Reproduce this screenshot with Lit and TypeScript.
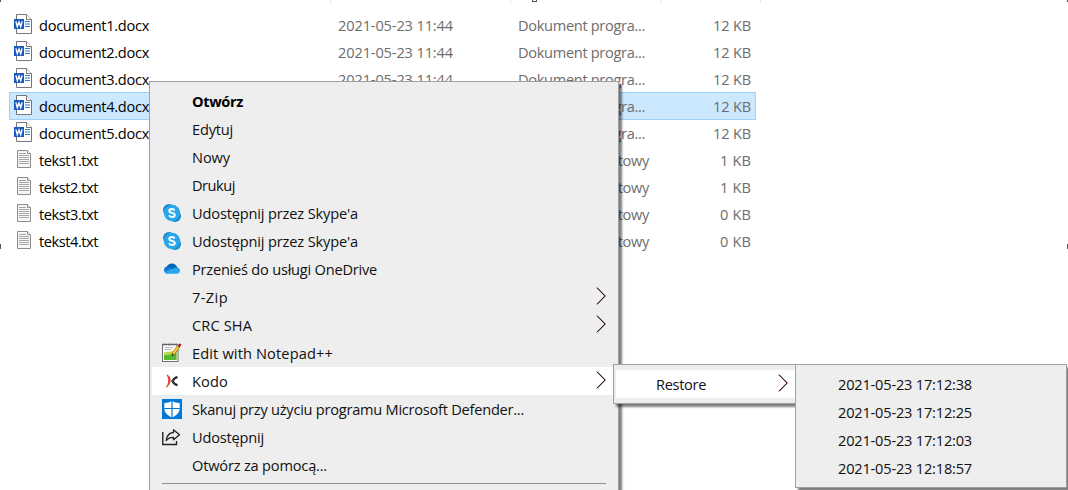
import { LitElement, html, css, svg, nothing } from "lit";
import { customElement, property } from "lit/decorators.js";
import { classMap } from "lit/directives/class-map.js";

/* Label whose letter spacing is adjusted so that it takes a given width. */
@customElement("fit-label")
class FitLabel extends LitElement {
  @property() text = "";
  @property({ type: Number }) width = 0;
  static styles = css`
    :host { display: block; white-space: pre; flex: none; }
    .t { display: inline-block; }
  `;
  render() {
    return html`<span class="t">${this.text}</span>`;
  }
  updated() {
    const el = this.renderRoot.querySelector(".t") as HTMLElement;
    el.style.letterSpacing = "0px";
    const natural = el.getBoundingClientRect().width;
    el.style.letterSpacing = (this.width - natural) / this.text.length + "px";
  }
}

const chevron = html`<svg class="chev" width="12" height="18" viewBox="0 0 12 18" fill="none">
  <path d="M.4 .7 8.600 9 .4 17.300" stroke="#f0a030" stroke-width=".8" />
  <path d="M1.400 .7 9.600 9 1.400 17.300" stroke="#3f7fd0" stroke-width=".8" />
  <path d="M.9 .7 9.100 9 .9 17.300" stroke="#3a0508" stroke-width="1" />
</svg>`;

const wordIcon = html`<svg width="18" height="20" viewBox="0 0 18 20">
  <path d="M2.5.5h10l5 5v14h-15z" fill="#fff" stroke="#767676" />
  <path d="M12.5.5v5h5" fill="#fff" stroke="#767676" />
  <path d="M11 7.5h5M11 10h5M11 12.5h5" stroke="#2b7cd3" />
  <rect y="5" width="10" height="10" fill="#185abd" />
  <path d="M1.9 7.4 3.3 12.6 5 8 6.7 12.6 8.1 7.4" fill="none" stroke="#fff" stroke-width="1.4" />
</svg>`;

const textIcon = html`<svg width="14" height="18" viewBox="0 0 14 18">
  <path d="M.5.5h10l3 3v14H.5z" fill="#f7f7f7" stroke="#8c8c8c" />
  <path d="M10.5.5v3h3" fill="#fff" stroke="#8c8c8c" />
  <path d="M2 3.5h7M2 5.5h10M2 7.5h10M2 9.5h10M2 11.5h10M2 13.5h10" stroke="#a6a6a6" />
</svg>`;

const icons: Record<string, unknown> = {
  skype: svg`<circle cx="7" cy="7" r="6" fill="#1688cc"/><circle cx="13" cy="13" r="6" fill="#1688cc"/>
    <circle cx="10" cy="10" r="8.2" fill="#28a8ea"/>
    <path d="M12.6 7.5C12.1 6.4 11.2 6 10 6 8.500 6 7.300 6.600 7.300 7.900 7.300 10.500 12.800 9.300 12.800 12 12.800 13.300 11.600 14 10 14 8.600 14 7.500 13.500 7.100 12.300" fill="none" stroke="#fff" stroke-width="1.9"/>`,
  cloud: svg`<path d="M4.500 8.500A5.600 5.600 0 0 1 14.800 7.500L18 11 12 14.500Z" fill="#0364b8"/>
    <path d="M5.500 7.600C3.300 7.500 2 9.200 2 11s1.500 3.700 3.500 3.700L14 11Z" fill="#1078d4"/>
    <path d="M14.200 8.600a3.300 3.300 0 0 1 3.700 3.200c0 1.700-1.300 3-3 3H5.300c-1.300 0-2.200-.6-2.700-1.500L8 10.600Z" fill="#28a8ea"/>`,
  notepad: svg`<rect x=".5" y="1.500" width="15.500" height="17" fill="#fff" stroke="#707070"/>
    <path d="M2 9.500 14.500 7.500v9.500H2z" fill="#b5dc48"/><path d="M2 12.500 14.500 10.500v6.500H2z" fill="#58b830"/>
    <path d="M2.500 4.500h9M2.500 6.500h7" stroke="#b8b8b8"/><path d="M1 1.500h14" stroke="#606060" stroke-width="2" stroke-dasharray="1.500 1"/>
    <path d="M16.500 3.500 10.800 11.500" stroke="#8b671a" stroke-width="3.400"/><path d="M16.500 3.500 11 11" stroke="#f5c92f" stroke-width="2.200"/>
    <path d="m10 13 .3-2.400 1.800 1.300z" fill="#222"/><path d="m15.800 3.300 1.900-3 1.800 1.300-2 2.800z" fill="#b01018"/>`,
  kodo: svg`<path d="M5.200 4C9.300 6 9.300 12 4.600 16.200 7.200 12 7.300 8 5.200 4z" fill="#e03a2f" stroke="#e03a2f" stroke-width=".9"/>
    <path d="M15.500 6.200C13 6.600 11.600 8 10.600 10.200c1 2 2.400 3.500 4.900 4" fill="none" stroke="#2b2b2b" stroke-width="2.200"/>
    <path d="M9.500 10.200h2" stroke="#444" stroke-width="1.800"/>`,
  shield: svg`<rect width="20" height="20" fill="#0078d7"/>
    <path d="M10 2c2 1.200 4.500 2 7.700 2v5.500c0 4-3.200 7-7.700 9-4.500-2-7.700-5-7.700-9V4C5.500 4 8 3.200 10 2z" fill="#fff"/>
    <path d="M10 2v17M2 9.500h16" stroke="#0078d7" stroke-width="1.200"/>`,
  share: svg`<path d="M.8 5v12.500h13.700v-3.500" fill="none" stroke="#222" stroke-width="1.400"/>
    <path d="M11.500 2.800 17.500 7.800l-6 5V10.300C8 10.200 6 11.200 4.200 13.500 4.800 9 7 5.800 11.500 5.500z" fill="none" stroke="#222" stroke-width="1.300" stroke-linejoin="round"/>`,
};

type Item = { label: string; w: number; icon?: string; bold?: boolean; sub?: boolean; active?: boolean };

@customElement("popup-menu")
class PopupMenu extends LitElement {
  @property({ attribute: false }) items: Item[] = [];
  @property({ type: Boolean }) divider = false;
  static styles = css`
    :host {
      display: block; box-sizing: border-box; background: #eee; border: 1px solid #a0a0a0;
      padding: 5px 2px; box-shadow: 3px 3px 2px rgba(0, 0, 0, .5); color: #111;
    }
    .item { display: flex; align-items: center; height: 28px; padding-right: var(--arrow-gap, 8px); }
    .active { background: #fff; }
    .bold { font-weight: 700; color: #000; }
    .icon { width: 20px; height: 20px; margin: 0 10px 0 10px; flex: none; }
    .icon svg { display: block; }
    .space { flex: 1; }
    .chev { margin-top: -2px; flex: none; }
    .line { height: 1px; background: #919191; margin: 4px 10px 8px 10px; }
  `;
  render() {
    return html`${this.items.map(
      (i) => html`<div class=${classMap({ item: true, active: !!i.active, bold: !!i.bold })}>
        <div class="icon">${i.icon ? html`<svg width="20" height="20" viewBox="0 0 20 20">${icons[i.icon]}</svg>` : nothing}</div>
        <fit-label .text=${i.label} .width=${i.w}></fit-label>
        <div class="space"></div>
        ${i.sub ? chevron : nothing}
      </div>`
    )}${this.divider ? html`<div class="line"></div>` : nothing}`;
  }
}

const mainItems: Item[] = [
  { label: "Otwórz", w: 51, bold: true },
  { label: "Edytuj", w: 41 },
  { label: "Nowy", w: 38 },
  { label: "Drukuj", w: 43 },
  { label: "Udostępnij przez Skype'a", w: 166, icon: "skype" },
  { label: "Udostępnij przez Skype'a", w: 166, icon: "skype" },
  { label: "Przenieś do usługi OneDrive", w: 185, icon: "cloud" },
  { label: "7-Zip", w: 36, sub: true },
  { label: "CRC SHA", w: 60, sub: true },
  { label: "Edit with Notepad++", w: 141, icon: "notepad" },
  { label: "Kodo", w: 36, icon: "kodo", sub: true, active: true },
  { label: "Skanuj przy użyciu programu Microsoft Defender...", w: 332, icon: "shield" },
  { label: "Udostępnij", w: 72, icon: "share" },
  { label: "Otwórz za pomocą...", w: 135 },
];
const restoreItems: Item[] = [{ label: "Restore", w: 50, sub: true, active: true }];
const versions: Item[] = ["17:12:38", "17:12:25", "17:12:03", "12:18:57"].map((t) => ({ label: "2021-05-23 " + t, w: 134 }));

const files = [
  ...[1, 2, 3, 4, 5].map((n) => ({ name: `document${n}.docx`, word: true, size: "12 KB" })),
  ...[1, 2, 3, 4].map((n) => ({ name: `tekst${n}.txt`, word: false, size: n < 3 ? "1 KB" : "0 KB" })),
];

@customElement("app-root")
class AppRoot extends LitElement {
  static styles = css`
    :host {
      display: block; position: relative; width: 1068px; height: 490px; overflow: hidden; background: #fff;
      font: 14.6px/20px "Open Sans", "Noto Sans", sans-serif; color: #000;
    }
    .ticks { display: grid; grid-template-columns: 331px 180px 150px 100px; height: 3px; }
    .ticks i { border-right: 1px solid #e2e2e2; }
    .list { padding: 8px 0 0 9px; width: 747px; }
    .row {
      display: grid; grid-template-columns: 29px 299px 180px 1fr auto; align-items: center;
      box-sizing: border-box; height: 28px; margin-bottom: -1px; padding-right: 4px; border: 1px solid transparent;
    }
    .selected { background: #cce8ff; border-color: #99d1ff; }
    .ico { padding-left: 4px; margin-top: -2px; }
    .ico.txt { padding-left: 7px; }
    .ico svg { display: block; }
    .muted { color: #6d6d6d; }
    .handle { position: absolute; background: #555; width: 1px; height: 5px; }
    .tl { left: 0; top: 0; height: 2px; }
    .tr { right: 0; top: 0; height: 2px; }
    .ml { left: 0; top: 244px; }
    .mr { right: 0; top: 244px; }
    .tm { left: 532px; top: -3px; width: 3px; height: 3px; border: 1px solid #555; background: #fff; }
    popup-menu { position: absolute; }
    .main { left: 149px; top: 81px; width: 470px; }
    .restore { left: 613px; top: 364px; width: 186px; --arrow-gap: 6px; }
    .versions { left: 795px; top: 364px; width: 272px; }
  `;
  render() {
    return html`
      <div class="ticks"><i></i><i></i><i></i><i></i></div>
      <div class="list">
        ${files.map(
          (f, i) => html`<div class=${classMap({ row: true, selected: i === 3 })}>
            <div class=${classMap({ ico: true, txt: !f.word })}>${f.word ? wordIcon : textIcon}</div>
            <fit-label .text=${f.name} .width=${f.word ? 110 : 59}></fit-label>
            <fit-label class="muted" .text=${"2021-05-23 11:44"} .width=${115}></fit-label>
            <fit-label class="muted" .text=${f.word ? "Dokument progra..." : "Dokument tekstowy"} .width=${f.word ? 127 : 131}></fit-label>
            <fit-label class="muted" .text=${f.size} .width=${f.size.length === 5 ? 38 : 31}></fit-label>
          </div>`
        )}
      </div>
      <div class="handle tl"></div><div class="handle tr"></div>
      <div class="handle ml"></div><div class="handle mr"></div>
      <div class="handle tm"></div>
      <popup-menu class="main" .items=${mainItems} divider></popup-menu>
      <popup-menu class="restore" .items=${restoreItems}></popup-menu>
      <popup-menu class="versions" .items=${versions}></popup-menu>
    `;
  }
}
